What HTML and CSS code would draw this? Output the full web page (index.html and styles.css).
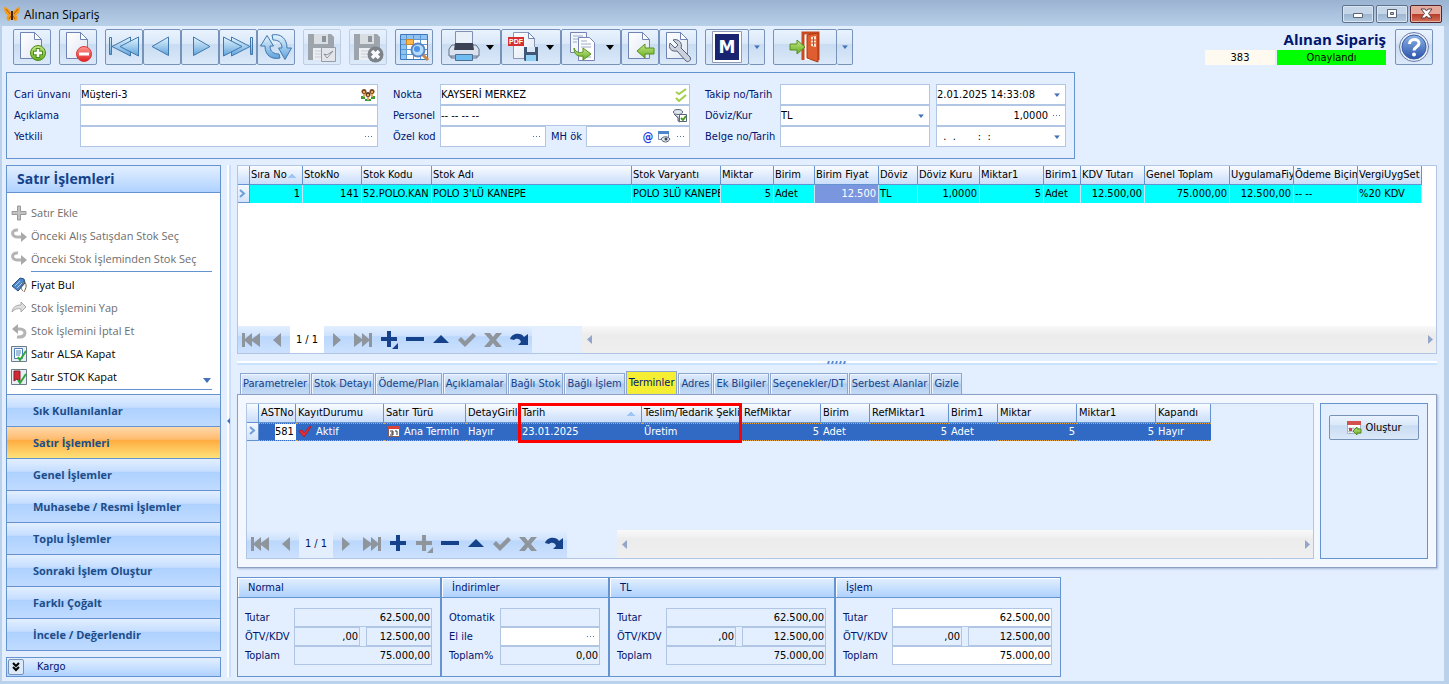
FILE: index.html
```html
<!DOCTYPE html>
<html lang="tr">

<head>
    <meta charset="UTF-8">
    <meta name="viewport" content="width=device-width, initial-scale=1.0">
    <title>Alınan Sipariş</title>
    <link rel="stylesheet" href="styles.css">
</head>

<body>
    <!-- shared icons -->
    <svg class="sprite" aria-hidden="true">
        <defs>
            <linearGradient id="blue" x1="0" y1="0" x2="0" y2="1">
                <stop offset="0" stop-color="#e6f5fd" />
                <stop offset="1" stop-color="#5fa3dc" />
            </linearGradient>
            <linearGradient id="paper" x1="0" y1="0" x2="1" y2="1">
                <stop offset="0" stop-color="#ffffff" />
                <stop offset="1" stop-color="#dfe7f3" />
            </linearGradient>
            <linearGradient id="green" x1="0" y1="0" x2="0" y2="1">
                <stop offset="0" stop-color="#c6e88a" />
                <stop offset="1" stop-color="#63ad1e" />
            </linearGradient>
            <linearGradient id="red" x1="0" y1="0" x2="0" y2="1">
                <stop offset="0" stop-color="#ff9a94" />
                <stop offset="1" stop-color="#e01f22" />
            </linearGradient>
            <linearGradient id="help" x1="0" y1="0" x2="0" y2="1">
                <stop offset="0" stop-color="#8fb4e6" />
                <stop offset="1" stop-color="#2a55ac" />
            </linearGradient>
        </defs>
        <symbol id="page" viewBox="0 0 32 32">
            <path d="M4.500 1.500h14l7 7v19h-21z" fill="url(#paper)" stroke="#6f83b5" />
            <path d="M18.500 1.500v7h7z" fill="#fff" stroke="#6f83b5" />
        </symbol>
        <symbol id="floppy" viewBox="0 0 32 32">
            <path d="M2 3h23l3 3v23H2z" fill="#8e9297" />
            <path d="M8 3h14v10H8z" fill="#d7dadd" />
            <path d="M16 5h4v6h-4z" fill="#777b80" />
            <path d="M7 17h17v12H7z" fill="#eef0f2" />
            <path d="M9 20h13M9 23h13M9 26h13" stroke="#c3c7cb" />
        </symbol>
        <symbol id="dots" viewBox="0 0 8 2">
            <path d="M0 0h1v1H0zM3 0h1v1H3zM6 0h1v1H6z" fill="#5577a8" />
        </symbol>
        <symbol id="caret" viewBox="0 0 8 5">
            <path d="M0 0h8L4 5z" fill="currentColor" />
        </symbol>
        <symbol id="nav-first" viewBox="0 0 20 20">
            <path d="M1 3h3v6l7-6v6l8-6v14l-8-6v6l-7-6v6H1z" fill="currentColor" />
        </symbol>
        <symbol id="nav-prev" viewBox="0 0 20 20">
            <path d="M14 3v14L6 10z" fill="currentColor" />
        </symbol>
        <symbol id="nav-next" viewBox="0 0 20 20">
            <path d="M6 3v14l8-7z" fill="currentColor" />
        </symbol>
        <symbol id="nav-last" viewBox="0 0 20 20">
            <path d="M19 3h-3v6L9 3v6L1 3v14l8-6v6l7-6v6h3z" fill="currentColor" />
        </symbol>
        <symbol id="nav-plus" viewBox="0 0 20 20">
            <path d="M8 1h4v6h6v4h-6v6H8v-6H2V7h6z" fill="currentColor" />
        </symbol>
        <symbol id="nav-plus-sub" viewBox="0 0 20 20">
            <path d="M8 1h4v6h6v4h-6v6H8v-6H2V7h6zM19 13v6h-6z" fill="currentColor" />
        </symbol>
        <symbol id="nav-minus" viewBox="0 0 20 20">
            <path d="M1 7h18v4H1z" fill="currentColor" />
        </symbol>
        <symbol id="nav-up" viewBox="0 0 20 20">
            <path d="M10 5l8 8H2z" fill="currentColor" />
        </symbol>
        <symbol id="nav-ok" viewBox="0 0 20 20">
            <path d="M1 10l3-3 4 4 8-8 3 3L8 17z" fill="currentColor" />
        </symbol>
        <symbol id="nav-cancel" viewBox="0 0 20 20">
            <path d="M1 3h6l3 4 3-4h6l-6 7 6 7h-6l-3-4-3 4H1l6-7z" fill="currentColor" />
        </symbol>
        <symbol id="nav-redo" viewBox="0 0 20 20">
            <path d="M1 9C3 3 12 2 15 7l4-3v11H9l3-3c-1-4-5-4-7-2z" fill="currentColor" />
        </symbol>
    </svg>

    <div class="window">
        <header class="titlebar">
            <svg class="app-icon" viewBox="0 0 16 16">
                <path d="M8 8C6 4 3 1 0 1c0 4 1 7 4 8-2 2-2 4 0 6 2 0 4-3 4-5 0 2 2 5 4 5 2-2 2-4 0-6 3-1 4-4 4-8-3 0-6 3-8 7z" fill="#f39c1d" />
                <path d="M2 3l4 5M14 3l-4 5M5 13l2-3M11 13l-2-3" stroke="#b5610c" />
                <path d="M8 5v9" stroke="#3c2412" stroke-width="2" />
            </svg>
            <span class="window-title">Alınan Sipariş</span>
            <button class="win-btn" aria-label="Küçült"><svg width="32" height="18" viewBox="0 0 32 18"><path d="M11.500 8.500h9v4h-9z" fill="#fff" stroke="#5a6675" /></svg></button>
            <button class="win-btn" aria-label="Büyüt"><svg width="32" height="18" viewBox="0 0 32 18"><path d="M11.500 4.500h9v8h-9z" fill="#fff" stroke="#5a6675" /><path d="M14.500 7.500h3v2h-3z" fill="#9fb8d2" stroke="#5a6675" /></svg></button>
            <button class="win-btn close" aria-label="Kapat"><svg width="32" height="18" viewBox="0 0 32 18"><path d="M11 4h4l1.500 2L18 4h4l-3.500 4.500L22 13h-4l-1.500-2L15 13h-4l3.500-4.500z" fill="#fff" stroke="#5b3a44" /></svg></button>
        </header>

        <div class="toolbar">
            <div class="tool-group">
                <button class="tool" aria-label="Yeni"><svg viewBox="0 0 32 32"><use href="#page" /><circle cx="22" cy="22" r="7.500" fill="url(#green)" stroke="#4d8a1b" /><path d="M22 17v10M17 22h10" stroke="#4d8a1b" stroke-width="4.500" /><path d="M22 18v8M18 22h8" stroke="#fff" stroke-width="2.500" /></svg></button>
            </div>
            <div class="tool-group">
                <button class="tool" aria-label="Sil"><svg viewBox="0 0 32 32"><use href="#page" /><circle cx="22" cy="23" r="7.500" fill="url(#red)" stroke="#d8393b" /><path d="M17 23h10" stroke="#fff" stroke-width="3" /></svg></button>
            </div>
            <div class="tool-group">
                <button class="tool" aria-label="İlk"><svg viewBox="0 0 32 32"><g fill="url(#blue)" stroke="#4077ae"><path d="M1.500 6.500h2v17h-2z" /><path d="M22.500 6v19L4 15.500z" /><path d="M30.500 6v19L12 15.500z" /></g></svg></button>
                <button class="tool" aria-label="Önceki"><svg viewBox="0 0 32 32"><path d="M22.500 6v18.500L6 15.500z" fill="url(#blue)" stroke="#4077ae" /></svg></button>
                <button class="tool" aria-label="Sonraki"><svg viewBox="0 0 32 32"><path d="M9.500 6v18.500L26 15.500z" fill="url(#blue)" stroke="#4077ae" /></svg></button>
                <button class="tool" aria-label="Son"><svg viewBox="0 0 32 32"><g fill="url(#blue)" stroke="#4077ae"><path d="M28.500 6.500h2v17h-2z" /><path d="M9.500 6v19L28 15.500z" /><path d="M1.500 6v19L20 15.500z" /></g></svg></button>
                <button class="tool" aria-label="Yenile"><svg viewBox="0 0 32 32"><g fill="url(#blue)" stroke="#4077ae"><path d="M7 4.500L13.500 15H10c0 6 4 8 9 8l1 4C11 29 5 24 5 15H.500z" /><path d="M25 28.500L18.500 17H22c0-6-4-8-9-8l-1-5c9-2 15 4 15 13h4.500z" /></g></svg></button>
            </div>
            <div class="tool-group">
                <button class="tool" disabled aria-label="Kaydet"><svg viewBox="0 0 32 32"><use href="#floppy" /><path d="M15.500 16.500h14v14h-14z" fill="#e2e5e8" stroke="#85898e" /><path d="M18 23l3 4 6-7-6 4z" fill="#fff" stroke="#777" /></svg></button>
            </div>
            <div class="tool-group">
                <button class="tool" disabled aria-label="Vazgeç"><svg viewBox="0 0 32 32"><use href="#floppy" /><circle cx="23.500" cy="23.500" r="8" fill="#65696d" /><path d="M20 20l7 7M27 20l-7 7" stroke="#fff" stroke-width="3.500" /></svg></button>
            </div>
            <div class="tool-group">
                <button class="tool" aria-label="Listele"><svg viewBox="0 0 32 32"><path d="M2.500 3.500h27v25h-27z" fill="#fff" stroke="#3c77bb" /><path d="M3 4h26v4H3zM3 4h5v24H3z" fill="#8dc2f2" /><path d="M8.500 4v24M15.500 4v24M22.500 4v24M3 8.500h26M3 13.500h26M3 18.500h26M3 23.500h26" stroke="#5b97d2" /><path d="M8.500 8.500h7v5h-7z" fill="#ffb64d" stroke="#cf8420" /><path d="M24 23l6 6" stroke="#c78746" stroke-width="3" /><circle cx="20" cy="19" r="6.500" fill="#b3dcff" stroke="#5a85c4" stroke-width="2" /><circle cx="19" cy="18" r="3" fill="#4b93e5" /></svg></button>
            </div>
            <div class="tool-group">
                <button class="tool drop" aria-label="Yazdır"><svg viewBox="0 0 32 32"><path d="M7.500.500h17v13h-17z" fill="#eaf0f8" stroke="#8190ae" /><path d="M3 15h26v12H3z" fill="#c8d2e3" stroke="#63708d" /><path d="M1 18l3-4h24l3 4v7H1z" fill="#dbe3ef" stroke="#63708d" /><path d="M7 12h18l1 7H6z" fill="#3b4254" /><path d="M7.500 23.500h17v6h-17z" fill="#6fbdf0" stroke="#4e6e95" /></svg><svg class="caret" viewBox="0 0 8 5"><use href="#caret" /></svg></button>
                <button class="tool drop" aria-label="PDF"><svg viewBox="0 0 32 32"><path d="M5.500 1.500h15l6 6v20h-21z" fill="url(#paper)" stroke="#8a97b5" /><path d="M20.500 1.500v6h6z" fill="#fff" stroke="#6f83b5" /><path d="M0 6h16v9H0z" fill="#d62f31" /><text class="pdf-mark" x="1" y="13">PDF</text><path d="M16 16h14v14H17l-1-1z" fill="#3f5774" /><path d="M19 16h8v5h-8z" fill="#dce8f5" /><path d="M18 24h10v6H18z" fill="#8fd0f4" /></svg><svg class="caret" viewBox="0 0 8 5"><use href="#caret" /></svg></button>
                <button class="tool drop" aria-label="Kopyala"><svg viewBox="0 0 32 32"><path d="M2.500 1.500h16v20h-16z" fill="#f3f7fc" stroke="#7685b3" /><path d="M10.500 6.500h11l5 5v18h-16z" fill="#fff" stroke="#7685b3" /><path d="M5 5h10M5 8h5M5 11h4M13 10h6M13 13h10M13 16h10M16 26h7" stroke="#9aa9ca" /><path d="M6 17c2 5 6 5 9 4v-4l8 6-8 6v-4C9 26 6 23 6 17z" fill="url(#green)" stroke="#568f21" /></svg><svg class="caret" viewBox="0 0 8 5"><use href="#caret" /></svg></button>
                <button class="tool" aria-label="Aktar"><svg viewBox="0 0 32 32"><use href="#page" /><path d="M13 20l8-7v4h9v6h-9v4z" fill="url(#green)" stroke="#568f21" /></svg></button>
                <button class="tool" aria-label="Ayarlar"><svg viewBox="0 0 32 32"><use href="#page" /><path d="M8 12l5 5 3-3-5-5c5-2 10 3 8 8l9 9c2 3-2 6-4 4l-9-10c-6 1-9-3-7-8z" fill="#cbd2dd" stroke="#55617a" /></svg></button>
            </div>
            <div class="tool-group">
                <button class="tool wide-m" aria-label="Mikro"><svg viewBox="0 0 32 32"><path d="M1.500.500h29v31h-29z" fill="#fff" stroke="#8f9bb5" /><path d="M4 3h24v26H4z" fill="#192471" /><text class="m-mark" x="16" y="22">M</text></svg></button>
                <button class="tool arrow" aria-label="Seçenekler"><svg class="caret" viewBox="0 0 8 5"><use href="#caret" /></svg></button>
            </div>
            <div class="tool-group">
                <button class="tool wide-exit" aria-label="Çıkış"><svg viewBox="0 0 32 32"><path d="M14 29V2h15v27" fill="#fff" stroke="#c84a20" stroke-width="3" /><path d="M18 4l11-2v29l-11-4z" fill="#e05d31" stroke="#a93912" /><path d="M22 6l5-1v11l-5-1z" fill="#fbe5cf" /><path d="M22 9h5M22 12h5M24.500 6v9" stroke="#c84a20" /><path d="M1 13h7V9l8 7-8 7v-4H1z" fill="url(#green)" stroke="#568f21" /></svg></button>
                <button class="tool arrow" aria-label="Çıkış seçenekleri"><svg class="caret" viewBox="0 0 8 5"><use href="#caret" /></svg></button>
            </div>
            <div class="status">
                <h1>Alınan Sipariş</h1>
                <div class="status-row">
                    <span class="order-no">383</span>
                    <span class="approved">Onaylandı</span>
                </div>
            </div>
            <button class="tool" aria-label="Yardım"><svg viewBox="0 0 32 32"><circle cx="16" cy="16" r="14.500" fill="#e6ebf6" stroke="#6c7da8" /><circle cx="16" cy="16" r="12" fill="url(#help)" stroke="#3a5fa8" /><path d="M11.500 13c0-6 9.500-6 9.500-.500 0 3-5 3.500-5 7" fill="none" stroke="#fff" stroke-width="3" /><circle cx="16" cy="23.500" r="2" fill="#fff" /></svg></button>
        </div>

        <form class="order-form">
            <div class="form-col col-customer">
                <label for="cari">Cari ünvanı</label>
                <div class="field"><input id="cari" value="Müşteri-3"><button type="button" aria-label="Cari seç"><svg width="14" height="14" viewBox="0 0 14 14"><path d="M0 8h4v3H0zM10 8h4v3h-4zM4 11h6v2H4z" fill="#3e9a37" /><path d="M2 6h2v3H2zM10 6h2v3h-2zM6 9h2v3H6z" fill="#e0a860" /><circle cx="3" cy="3.500" r="2.500" fill="#7c4a1e" /><circle cx="11" cy="3.500" r="2.500" fill="#7c4a1e" /><circle cx="7" cy="6.500" r="2.500" fill="#6a3c18" /><path d="M2 3h2v2H2zM10 3h2v2h-2zM6 6h2v2H6z" fill="#e0a860" /></svg></button></div>
                <label for="aciklama">Açıklama</label>
                <div class="field"><input id="aciklama"></div>
                <label for="yetkili">Yetkili</label>
                <div class="field"><input id="yetkili"><button type="button" aria-label="Yetkili seç"><svg width="8" height="2"><use href="#dots" /></svg></button></div>
            </div>
            <div class="form-col col-point">
                <label for="nokta">Nokta</label>
                <div class="field"><input id="nokta" value="KAYSERİ MERKEZ"><button type="button" aria-label="Nokta seç"><svg width="12" height="14" viewBox="0 0 12 14"><path d="M1 4l3 2 7-5M1 10l3 3 7-6" fill="none" stroke="#a2ce4b" stroke-width="2" /></svg></button></div>
                <label for="personel">Personel</label>
                <div class="field"><input id="personel" value="-- -- -- --"><button type="button" aria-label="Personel seç"><svg width="14" height="14" viewBox="0 0 14 14"><ellipse cx="5" cy="3" rx="4.500" ry="2.500" fill="#dfe5ee" stroke="#59657c" /><path d="M1 5l4 4v3l2 1V8" fill="#aeb8c8" stroke="#59657c" /><path d="M6.500 5.500h7v7h-7z" fill="#fff" stroke="#59657c" /><path d="M8 9l2 2 3-4" fill="none" stroke="#4a9d22" stroke-width="2" /></svg></button></div>
                <label for="ozelkod">Özel kod</label>
                <div class="split-row">
                    <div class="field"><input id="ozelkod"><button type="button" aria-label="Özel kod seç"><svg width="8" height="2"><use href="#dots" /></svg></button></div>
                    <label for="mhok">MH ök</label>
                    <div class="field mh-field"><input id="mhok"><button type="button" class="at">@</button><button type="button" aria-label="Göster"><svg width="13" height="12" viewBox="0 0 13 12"><path d="M.500.500h10v8H.500z" fill="#f4f8fd" stroke="#7d93b5" /><path d="M0 0h11v3H0z" fill="#4d86c8" /><path d="M3 8c2-3 7-3 9 0-2 4-7 4-9 0z" fill="#dfe5ee" stroke="#5b6577" /><circle cx="8" cy="8" r="1.500" fill="#3c4759" /></svg></button><button type="button" aria-label="MH ök seç"><svg width="8" height="2"><use href="#dots" /></svg></button></div>
                </div>
            </div>
            <div class="form-col col-doc">
                <label for="takip">Takip no/Tarih</label>
                <div class="field"><input id="takip"></div>
                <div class="field"><input aria-label="Tarih" value="2.01.2025 14:33:08"><button type="button" aria-label="Takvim"><svg class="caret" viewBox="0 0 8 5"><use href="#caret" /></svg></button></div>
                <label for="doviz">Döviz/Kur</label>
                <div class="field"><select id="doviz"><option>TL</option></select><svg class="caret" viewBox="0 0 8 5"><use href="#caret" /></svg></div>
                <div class="field"><input class="num" aria-label="Kur" value="1,0000"><button type="button" aria-label="Kur seç"><svg width="8" height="2"><use href="#dots" /></svg></button></div>
                <label for="belge">Belge no/Tarih</label>
                <div class="field"><input id="belge"></div>
                <div class="field"><input class="blank-date" aria-label="Belge tarihi" value="  .  .       :  :"><button type="button" aria-label="Takvim"><svg class="caret" viewBox="0 0 8 5"><use href="#caret" /></svg></button></div>
            </div>
        </form>

        <div class="content">
            <aside class="sidebar">
                <div class="nav-panel">
                    <h2>Satır İşlemleri</h2>
                    <div class="actions">
                        <button disabled><svg viewBox="0 0 16 16"><path d="M6.500 1h3v5.500H15v3H9.500V15h-3V9.500H1v-3h5.500z" fill="#c2c2c2" stroke="#9a9a9a" /></svg>Satır Ekle</button>
                        <button disabled><svg viewBox="0 0 16 16"><path d="M7 2C0 1 0 9 6 9h5" fill="none" stroke="#b4b4b4" stroke-width="3" /><path d="M10 4l6 5-6 5z" fill="#a9a9a9" /></svg>Önceki Alış Satışdan Stok Seç</button>
                        <button disabled><svg viewBox="0 0 16 16"><path d="M7 2C0 1 0 9 6 9h5" fill="none" stroke="#b4b4b4" stroke-width="3" /><path d="M10 4l6 5-6 5z" fill="#a9a9a9" /></svg>Önceki Stok İşleminden Stok Seç</button>
                        <hr>
                        <button><svg viewBox="0 0 16 16"><path d="M1 9l8-8 4 1 1 4-7 8z" fill="#4d86c8" stroke="#26507f" /><path d="M4 9l5-5M6 11l5-5" stroke="#a9cdf2" /><path d="M12 4c5 3 3 7 1 11M12 6c-3 4-2 6 0 8" fill="none" stroke="#745b3d" /></svg>Fiyat Bul</button>
                        <button disabled><svg viewBox="0 0 16 16"><path d="M1 12C2 6 6 5 10 5V2l5 5-5 5V9C6 8 4 9 1 12z" fill="#dedede" stroke="#a9a9a9" /></svg>Stok İşlemini Yap</button>
                        <button disabled><svg viewBox="0 0 16 16"><path d="M6 14c10 1 10-8 3-8H5" fill="none" stroke="#b4b4b4" stroke-width="3" /><path d="M7 1L1 6l6 5z" fill="#a9a9a9" /></svg>Stok İşlemini İptal Et</button>
                        <button><svg viewBox="0 0 16 16"><path d="M.500.500h15v15H.500z" fill="#e8eef4" stroke="#6d7c8c" /><path d="M3.500 2.500h8v10h-8z" fill="#fff" stroke="#4a7fbc" /><path d="M5 5h5M5 7h5M5 9h4" stroke="#4a7fbc" /><path d="M7 11l2 3 6-9" fill="none" stroke="#2ea836" stroke-width="2" /></svg>Satır ALSA Kapat</button>
                        <button><svg viewBox="0 0 16 16"><path d="M.500.500h15v15H.500z" fill="#e8eef4" stroke="#6d7c8c" /><path d="M3 2h6v11l-3-3-3 2z" fill="#d32734" stroke="#86202a" /><path d="M7 11l2 3 6-9" fill="none" stroke="#2ea836" stroke-width="2" /></svg>Satır STOK Kapat<svg class="caret more" viewBox="0 0 8 5"><use href="#caret" /></svg></button>
                        <hr>
                    </div>
                    <nav class="groups">
                        <a href="#">Sık Kullanılanlar</a>
                        <a href="#" class="active">Satır İşlemleri</a>
                        <a href="#">Genel İşlemler</a>
                        <a href="#">Muhasebe / Resmi İşlemler</a>
                        <a href="#">Toplu İşlemler</a>
                        <a href="#">Sonraki İşlem Oluştur</a>
                        <a href="#">Farklı Çoğalt</a>
                        <a href="#">İncele / Değerlendir</a>
                    </nav>
                </div>
                <div class="cargo">
                    <button aria-label="Kargo aç"><svg width="8" height="10" viewBox="0 0 8 10"><path d="M1 1l3 3 3-3M1 5l3 3 3-3" fill="none" stroke="#000" stroke-width="2" /></svg></button>
                    <span>Kargo</span>
                </div>
            </aside>
            <div class="v-splitter"><svg width="4" height="6" viewBox="0 0 4 6"><path d="M3 0v6L0 3z" fill="#4472b8" /></svg></div>

            <main>
                <section class="lines">
                    <table class="grid lines-grid">
                        <colgroup><col><col><col><col><col><col><col><col><col><col><col><col><col><col><col><col><col><col></colgroup>
                        <thead>
                            <tr>
                                <th></th>
                                <th class="sorted">Sıra No</th>
                                <th>StokNo</th>
                                <th>Stok Kodu</th>
                                <th>Stok Adı</th>
                                <th>Stok Varyantı</th>
                                <th>Miktar</th>
                                <th>Birim</th>
                                <th>Birim Fiyat</th>
                                <th>Döviz</th>
                                <th>Döviz Kuru</th>
                                <th>Miktar1</th>
                                <th>Birim1</th>
                                <th>KDV Tutarı</th>
                                <th>Genel Toplam</th>
                                <th>UygulamaFiy</th>
                                <th>Ödeme Biçim</th>
                                <th>VergiUygSet</th>
                            </tr>
                        </thead>
                        <tbody>
                            <tr>
                                <td class="marker"><svg width="7" height="9" viewBox="0 0 7 9"><path d="M1 1l4 3.500L1 8" fill="none" stroke="#6f9edb" stroke-width="2" /></svg></td>
                                <td class="num">1</td>
                                <td class="num">141</td>
                                <td>52.POLO.KAN</td>
                                <td>POLO 3'LÜ KANEPE</td>
                                <td>POLO 3LÜ KANEPE</td>
                                <td class="num">5</td>
                                <td>Adet</td>
                                <td class="num focused">12.500</td>
                                <td>TL</td>
                                <td class="num">1,0000</td>
                                <td class="num">5</td>
                                <td>Adet</td>
                                <td class="num">12.500,00</td>
                                <td class="num">75.000,00</td>
                                <td class="num">12.500,00</td>
                                <td>-- --</td>
                                <td>%20 KDV</td>
                            </tr>
                        </tbody>
                    </table>
                    <div class="grid-footer">
                        <div class="navigator">
                            <button disabled aria-label="İlk"><svg><use href="#nav-first" /></svg></button>
                            <button disabled aria-label="Önceki"><svg><use href="#nav-prev" /></svg></button>
                            <span class="pos">1 / 1</span>
                            <button disabled aria-label="Sonraki"><svg><use href="#nav-next" /></svg></button>
                            <button disabled aria-label="Son"><svg><use href="#nav-last" /></svg></button>
                            <button aria-label="Ekle"><svg><use href="#nav-plus-sub" /></svg></button>
                            <button aria-label="Sil"><svg><use href="#nav-minus" /></svg></button>
                            <button aria-label="Düzenle"><svg><use href="#nav-up" /></svg></button>
                            <button disabled aria-label="Kaydet"><svg><use href="#nav-ok" /></svg></button>
                            <button disabled aria-label="Vazgeç"><svg><use href="#nav-cancel" /></svg></button>
                            <button aria-label="Yenile"><svg><use href="#nav-redo" /></svg></button>
                        </div>
                        <div class="scrollbar">
                            <button aria-label="Sola"><svg width="5" height="9" viewBox="0 0 5 9"><path d="M5 0v9L0 4.500z" fill="#93a5c8" /></svg></button>
                            <button aria-label="Sağa"><svg width="5" height="9" viewBox="0 0 5 9"><path d="M0 0v9l5-4.500z" fill="#93a5c8" /></svg></button>
                        </div>
                    </div>
                </section>

                <div class="h-splitter"><svg width="20" height="3" viewBox="0 0 20 3"><path d="M2 0L1 3M6 0L5 3M10 0L9 3M14 0l-1 3M18 0l-1 3" stroke="#5b8bd0" stroke-width="2" /></svg></div>

                <div class="tabs" role="tablist">
                    <button role="tab">Parametreler</button>
                    <button role="tab">Stok Detayı</button>
                    <button role="tab">Ödeme/Plan</button>
                    <button role="tab">Açıklamalar</button>
                    <button role="tab">Bağlı Stok</button>
                    <button role="tab">Bağlı İşlem</button>
                    <button role="tab" class="active" aria-selected="true">Terminler</button>
                    <button role="tab">Adres</button>
                    <button role="tab">Ek Bilgiler</button>
                    <button role="tab">Seçenekler/DT</button>
                    <button role="tab">Serbest Alanlar</button>
                    <button role="tab">Gizle</button>
                </div>
                <section class="tab-panel">
                    <div class="terms">
                        <div class="highlight"></div>
                        <table class="grid terms-grid">
                            <colgroup><col><col><col><col><col><col><col><col><col><col><col><col><col><col></colgroup>
                            <thead>
                                <tr>
                                    <th></th>
                                    <th>ASTNo</th>
                                    <th>KayıtDurumu</th>
                                    <th>Satır Türü</th>
                                    <th>DetayGirile</th>
                                    <th class="sorted">Tarih</th>
                                    <th>Teslim/Tedarik Şekli</th>
                                    <th>RefMiktar</th>
                                    <th>Birim</th>
                                    <th>RefMiktar1</th>
                                    <th>Birim1</th>
                                    <th>Miktar</th>
                                    <th>Miktar1</th>
                                    <th>Kapandı</th>
                                </tr>
                            </thead>
                            <tbody>
                                <tr>
                                    <td class="marker"><svg width="7" height="9" viewBox="0 0 7 9"><path d="M1 1l4 3.500L1 8" fill="none" stroke="#6f9edb" stroke-width="2" /></svg></td>
                                    <td class="tree-cell"><span>581</span></td>
                                    <td><svg width="14" height="12" viewBox="0 0 14 12"><path d="M1 6l3-1 2 3 6-7 1 1-7 10z" fill="#e5303a" stroke="#b51e28" /></svg>Aktif</td>
                                    <td class="type-cell"><svg width="12" height="12" viewBox="0 0 12 12"><path d="M.500 2.500h11v9H.500z" fill="#fff" stroke="#8a5a5a" /><path d="M0 1h12v3H0z" fill="#d8443c" /><path d="M2 6h3v4H2M5 8H3M7 6h2v4" fill="none" stroke="#333" /></svg>Ana Termin</td>
                                    <td>Hayır</td>
                                    <td>23.01.2025</td>
                                    <td>Üretim</td>
                                    <td class="num">5</td>
                                    <td>Adet</td>
                                    <td class="num">5</td>
                                    <td>Adet</td>
                                    <td class="num">5</td>
                                    <td class="num">5</td>
                                    <td>Hayır</td>
                                </tr>
                            </tbody>
                        </table>
                        <div class="grid-footer">
                            <div class="navigator">
                                <button disabled aria-label="İlk"><svg><use href="#nav-first" /></svg></button>
                                <button disabled aria-label="Önceki"><svg><use href="#nav-prev" /></svg></button>
                                <span class="pos">1 / 1</span>
                                <button disabled aria-label="Sonraki"><svg><use href="#nav-next" /></svg></button>
                                <button disabled aria-label="Son"><svg><use href="#nav-last" /></svg></button>
                                <button aria-label="Ekle"><svg><use href="#nav-plus" /></svg></button>
                                <button disabled aria-label="Alt ekle"><svg><use href="#nav-plus-sub" /></svg></button>
                                <button aria-label="Sil"><svg><use href="#nav-minus" /></svg></button>
                                <button aria-label="Düzenle"><svg><use href="#nav-up" /></svg></button>
                                <button disabled aria-label="Kaydet"><svg><use href="#nav-ok" /></svg></button>
                                <button disabled aria-label="Vazgeç"><svg><use href="#nav-cancel" /></svg></button>
                                <button aria-label="Yenile"><svg><use href="#nav-redo" /></svg></button>
                            </div>
                            <div class="scrollbar">
                                <button aria-label="Sola"><svg width="5" height="9" viewBox="0 0 5 9"><path d="M5 0v9L0 4.500z" fill="#93a5c8" /></svg></button>
                                <button aria-label="Sağa"><svg width="5" height="9" viewBox="0 0 5 9"><path d="M0 0v9l5-4.500z" fill="#93a5c8" /></svg></button>
                            </div>
                        </div>
                    </div>
                    <div class="side-box">
                        <button class="create-btn"><svg width="16" height="16" viewBox="0 0 16 16"><path d="M1.500 1.500h13v12h-13z" fill="#fff" stroke="#a8b2c6" /><path d="M1 1h14v4H1z" fill="#d4524e" /><path d="M4 7v6M7 7v6M10 7v6M2 8.500h12M2 11.500h12" stroke="#b9c2d4" /><path d="M3 8h3v3H3z" fill="#c94743" /><path d="M7 11l4-4v2h4v4h-4v2z" fill="url(#green)" stroke="#568f21" /></svg>Oluştur</button>
                    </div>
                </section>

                <div class="totals">
                    <fieldset class="total-box">
                        <h3>Normal</h3>
                        <div class="total-rows">
                            <label for="n1">Tutar</label><input id="n1" value="62.500,00" readonly>
                            <label for="n2">ÖTV/KDV</label><div class="pair"><input id="n2" value=",00" readonly><input aria-label="Normal KDV" value="12.500,00" readonly></div>
                            <label for="n3">Toplam</label><input id="n3" value="75.000,00" readonly>
                        </div>
                    </fieldset>
                    <fieldset class="total-box discounts">
                        <h3>İndirimler</h3>
                        <div class="total-rows">
                            <label for="d1">Otomatik</label><input id="d1" readonly>
                            <label for="d2">El ile</label><div class="field"><input id="d2"><button type="button" aria-label="İndirim seç"><svg width="8" height="2"><use href="#dots" /></svg></button></div>
                            <label for="d3">Toplam%</label><input id="d3" value="0,00" readonly>
                        </div>
                    </fieldset>
                    <fieldset class="total-box large">
                        <h3>TL</h3>
                        <div class="total-rows">
                            <label for="t1">Tutar</label><input id="t1" value="62.500,00" readonly>
                            <label for="t2">ÖTV/KDV</label><div class="pair"><input id="t2" value=",00" readonly><input aria-label="TL KDV" value="12.500,00" readonly></div>
                            <label for="t3">Toplam</label><input id="t3" value="75.000,00" readonly>
                        </div>
                    </fieldset>
                    <fieldset class="total-box large">
                        <h3>İşlem</h3>
                        <div class="total-rows">
                            <label for="i1">Tutar</label><input id="i1" value="62.500,00">
                            <label for="i2">ÖTV/KDV</label><div class="pair"><input id="i2" value=",00" readonly><input aria-label="İşlem KDV" value="12.500,00" readonly></div>
                            <label for="i3">Toplam</label><input id="i3" value="75.000,00">
                        </div>
                    </fieldset>
                </div>
            </main>
        </div>
    </div>
</body>

</html>
```
FILE: styles.css
```css
* {
    box-sizing: border-box;
}

body {
    margin: 0;
    font-family: "DejaVu Sans Condensed", "DejaVu Sans", sans-serif;
    font-size: 11px;
    line-height: 16px;
    color: #00156e;
    background-color: #b9d1ea;
}

button,
input,
select {
    font: inherit;
    color: inherit;
    margin: 0;
    padding: 0;
    border: none;
    border-radius: 0;
    background: none;
}

svg {
    display: block;
    flex: none;
}

.sprite {
    position: absolute;
    width: 0;
    height: 0;
}

.caret {
    width: 6px;
    height: 4px;
    color: #4472b8;
}

.window {
    min-height: 100vh;
    display: flex;
    flex-direction: column;
    border: solid #b9d1ea;
    border-width: 0 5px 3px 2px;
    background-color: #e3efff;
}

/* title bar */
.titlebar {
    display: flex;
    align-items: center;
    gap: 2px;
    height: 26px;
    margin: 0 -5px 0 -2px;
    padding: 2px 7px 0 4px;
    background: linear-gradient(#9ab3d1, #b8cfe8);
}

.app-icon {
    width: 16px;
    height: 16px;
}

.window-title {
    flex-grow: 1;
    padding: 2px 0 0 2px;
    font-family: "Open Sans", sans-serif;
    font-size: 12px;
    color: #000;
}

.win-btn {
    width: 32px;
    height: 18px;
    display: flex;
    align-items: center;
    justify-content: center;
    border: 1px solid #5f738d;
    border-radius: 2px;
    background: linear-gradient(#c5d6e8 50%, #9cb5d0 50%, #b5cbe2);
    box-shadow: inset 0 0 0 1px #d9e5f2;
}

.win-btn.close {
    border-color: #54222a;
    background: linear-gradient(#e6a79b 50%, #b83a28 50%, #d3725a);
    box-shadow: inset 0 0 0 1px #e7b2a6;
}

/* toolbar */
.toolbar {
    display: flex;
    gap: 8px;
    padding: 3px 11px 7px;
}

.tool-group {
    display: flex;
}

.tool {
    display: flex;
    align-items: center;
    justify-content: center;
    width: 38px;
    height: 36px;
    border: 1px solid #7793b9;
    border-radius: 2px;
    background: linear-gradient(#eaf3fe, #dae8f8 40%, #c9dcf2 42%, #dbe9f9);
}

.tool > svg:first-child:not(.caret) {
    width: 32px;
    height: 32px;
}

.tool:disabled {
    border-color: #b5c5da;
    opacity: 0.8;
}

.tool.drop {
    width: 60px;
    gap: 6px;
}

.tool.drop .caret {
    width: 8px;
    height: 5px;
    color: #000;
}

.tool.wide-m {
    width: 44px;
}

.tool.wide-exit {
    width: 64px;
}

.tool.arrow {
    width: 16px;
    border-left: none;
}

.pdf-mark {
    font: bold 7px "Liberation Sans", sans-serif;
    fill: #fff;
}

.m-mark {
    font: bold 17px "DejaVu Sans", sans-serif;
    fill: #fff;
    text-anchor: middle;
}

.status {
    margin-left: auto;
    padding-right: 1px;
    text-align: right;
}

.status h1 {
    margin: 0;
    font-family: "Open Sans", sans-serif;
    font-size: 15px;
    line-height: 21px;
}

.status-row {
    display: flex;
    justify-content: flex-end;
    gap: 2px;
    line-height: 15px;
    color: #000;
    text-align: center;
}

.order-no {
    width: 70px;
    background-color: #fffaf0;
}

.approved {
    width: 109px;
    background-color: #00ff00;
}

/* order form */
.order-form {
    display: flex;
    align-self: flex-start;
    gap: 15px;
    margin: 0 0 6px 4px;
    padding: 11px 14px 11px 7px;
    border: 1px solid #6593cf;
}

.form-col {
    display: grid;
    grid-auto-rows: 21px;
    align-items: center;
}

.col-customer {
    grid-template-columns: 66px 298px;
}

.col-point {
    grid-template-columns: 47px 250px;
}

.col-doc {
    grid-template-columns: 75px 150px 130px;
}

.col-doc .field:nth-child(3n) {
    margin-left: 6px;
    width: 130px;
}

.field {
    display: flex;
    align-items: center;
    min-width: 0;
    height: 21px;
    padding-right: 2px;
    border: 1px solid #b1c6e4;
    background-color: #fff;
    color: #000;
}

.field input,
.field select {
    flex: 1;
    min-width: 0;
    height: 19px;
    outline: none;
    appearance: none;
}

.field button {
    display: flex;
    align-items: center;
    justify-content: center;
    min-width: 12px;
    height: 19px;
}

.field > .caret {
    margin-right: 3px;
}

.field .num {
    padding-right: 3px;
}

.split-row {
    display: flex;
    align-items: center;
}

.split-row .field {
    flex: 1;
}

.split-row label {
    width: 40px;
    padding-left: 5px;
}

.split-row .mh-field {
    flex: 0 0 104px;
    gap: 4px;
}

.field .at {
    font-size: 12px;
    font-weight: bold;
    color: #1f3fe0;
}

.num {
    text-align: right;
}

.blank-date {
    white-space: pre;
}

/* sidebar */
.content {
    flex-grow: 1;
    display: flex;
    padding: 0 7px 4px 4px;
}

.sidebar {
    flex: 0 0 215px;
    display: flex;
    flex-direction: column;
    justify-content: space-between;
    gap: 6px;
}

.nav-panel {
    display: flex;
    flex-direction: column;
    border: 1px solid #6593cf;
    background-color: #fff;
    font-family: "Open Sans", sans-serif;
}

.nav-panel h2 {
    margin: 0;
    padding-left: 10px;
    border-bottom: 1px solid #6593cf;
    background: linear-gradient(#e3efff, #afd2ff);
    font-size: 14px;
    line-height: 26px;
    color: #15428b;
}

.actions {
    padding: 8px 8px 3px 4px;
}

.actions button {
    display: flex;
    align-items: center;
    gap: 4px;
    width: 100%;
    height: 23px;
    color: #000;
    white-space: nowrap;
}

.actions button:disabled {
    color: #6d6d6d;
}

.actions button > svg:first-child {
    width: 16px;
    height: 16px;
}

.actions .more {
    width: 8px;
    height: 5px;
    margin: 8px 1px 0 auto;
}

.actions hr {
    margin: 1px 0 1px 20px;
    border: none;
    border-top: 1px solid #6593cf;
}

.groups a {
    display: block;
    height: 32px;
    padding-left: 26px;
    border-top: 1px solid #6593cf;
    background: linear-gradient(#e3efff, #c4ddff 40%, #add1ff 42%, #c0dbff);
    font-weight: bold;
    line-height: 31px;
    color: #204d89;
    text-decoration: none;
}

.groups a.active {
    background: linear-gradient(#ffd9aa, #ffbb6e 40%, #ffab3f 42%, #fee17a);
}

.cargo {
    display: flex;
    align-items: center;
    gap: 13px;
    height: 20px;
    padding-left: 1px;
    border: 1px solid #6593cf;
    background: linear-gradient(#e3efff, #afd2ff);
}

.cargo button {
    display: flex;
    align-items: center;
    justify-content: center;
    width: 16px;
    height: 16px;
    border: 1px solid #7793b9;
    border-radius: 2px;
    background-color: #dbe9f9;
}

.v-splitter {
    display: flex;
    align-items: center;
    justify-content: flex-end;
    width: 4px;
    margin: 0 6px;
    border-left: 2px solid #fff;
    background-color: #c9dfff;
}

main {
    flex: 1;
    min-width: 0;
    display: flex;
    flex-direction: column;
}

/* grids */
.grid {
    table-layout: fixed;
    width: 0;
    border-collapse: separate;
    border-spacing: 0;
    color: #000;
}

.grid th,
.grid td {
    height: 18px;
    padding: 0 2px 0 1px;
    overflow: hidden;
    white-space: nowrap;
    line-height: 16px;
}

.grid th {
    height: 19px;
    padding-right: 0;
    border: solid #6593cf;
    border-width: 0 1px 1px 0;
    background: linear-gradient(#fafcff, #dce9fd 60%, #cbdffb);
    font-weight: normal;
    text-align: left;
}

.grid th.sorted {
    background:
        linear-gradient(to bottom right, transparent 50%, #9cc6f8 50%) no-repeat right 10px top 7px / 4px 5px,
        linear-gradient(to bottom left, transparent 50%, #9cc6f8 50%) no-repeat right 6px top 7px / 4px 5px,
        linear-gradient(#fafcff, #dce9fd 60%, #cbdffb);
}

.grid .num {
    text-align: right;
}

.grid .marker {
    border: solid #6593cf;
    border-width: 0 1px 1px 0;
    background: linear-gradient(#f4f8ff, #d3e4fb);
}

.grid td svg {
    display: inline-block;
    vertical-align: middle;
}

.lines {
    flex: 1 0 189px;
    display: flex;
    flex-direction: column;
    justify-content: space-between;
    border: 1px solid #b1c6e4;
    background-color: #fff;
}

.lines-grid td:not(.marker) {
    border-right: 1px solid #c9e4f7;
    background-color: #00ffff;
}

.lines-grid td.focused {
    background-color: #7a96df;
    color: #fff;
}

.lines-grid col:nth-child(1) { width: 12px; }
.lines-grid col:nth-child(2) { width: 53px; }
.lines-grid col:nth-child(3) { width: 59px; }
.lines-grid col:nth-child(4) { width: 70px; }
.lines-grid col:nth-child(5) { width: 200px; }
.lines-grid col:nth-child(6) { width: 89px; }
.lines-grid col:nth-child(7) { width: 53px; }
.lines-grid col:nth-child(8) { width: 41px; }
.lines-grid col:nth-child(9) { width: 64px; }
.lines-grid col:nth-child(10) { width: 39px; }
.lines-grid col:nth-child(11) { width: 62px; }
.lines-grid col:nth-child(12) { width: 64px; }
.lines-grid col:nth-child(13) { width: 37px; }
.lines-grid col:nth-child(14) { width: 64px; }
.lines-grid col:nth-child(15) { width: 85px; }
.lines-grid col:nth-child(n+16) { width: 64px; }

.grid-footer {
    display: flex;
    gap: 50px;
    align-items: flex-end;
}

.lines .grid-footer {
    background-color: #e3efff;
}

.navigator {
    display: flex;
    height: 27px;
    background: linear-gradient(#e3efff, #cfe2fd 35%, #bad7fc 40%, #cde1fe);
}

.navigator button {
    display: flex;
    align-items: center;
    justify-content: center;
    width: 26px;
    color: #15428b;
}

.navigator button:disabled {
    color: #8f959c;
}

.navigator svg {
    width: 20px;
    height: 20px;
}

.navigator .pos {
    width: 34px;
    background-color: #fff;
    color: #000;
    line-height: 28px;
    text-align: center;
}

.scrollbar {
    flex: 1;
    display: flex;
    align-items: center;
    justify-content: space-between;
    height: 27px;
    padding: 0 3px 0 5px;
    background: linear-gradient(#f9f9f9, #ececec 35%, #efefef);
}

.h-splitter {
    display: flex;
    justify-content: center;
    height: 4px;
    margin: 7px 0 6px;
    border-bottom: 2px solid #c9e2ff;
    background-color: #fff;
}

/* tabs */
.tabs {
    display: flex;
    align-items: flex-end;
    gap: 1px;
    height: 23px;
    padding-left: 3px;
}

.tabs button {
    height: 21px;
    padding: 0 2px;
    border: 1px solid #8ca6cf;
    border-bottom: none;
    background: linear-gradient(#dfebfb, #c8dcf5 45%, #afcbed 50%, #c6dcf7);
    box-shadow: inset 1px 1px #f0f6ff;
    color: #15428b;
}

.tabs .active {
    height: 23px;
    background: #f5ee33;
    box-shadow: none;
    color: #00156e;
}

.tab-panel {
    display: flex;
    gap: 6px;
    height: 174px;
    padding: 8px;
    border: 1px solid #8ca0c5;
    background-color: #f3f7ff;
    box-shadow: 1px 1px 2px #a5b8d8;
}

.terms {
    position: relative;
    flex: 1;
    min-width: 0;
    display: flex;
    flex-direction: column;
    justify-content: space-between;
    border: 1px solid #b1c6e4;
    background-color: #e3efff;
}

.terms .navigator,
.terms .scrollbar {
    height: 28px;
}

.terms-grid th,
.terms-grid td {
    padding-left: 2px;
}

.terms-grid td:not(.marker) {
    border: dotted #e8a33d;
    border-width: 1px 0;
    background-color: #316ac5;
    color: #fff;
}

.terms-grid td.tree-cell {
    padding: 0 0 0 16px;
}

.tree-cell span {
    display: block;
    height: 16px;
    background-color: #fff;
    color: #000;
}

.terms-grid .type-cell {
    padding-left: 4px;
}

.terms-grid td svg {
    margin: 0 4px 2px 0;
}

.terms-grid col:nth-child(1) { width: 12px; }
.terms-grid col:nth-child(2) { width: 37px; }
.terms-grid col:nth-child(3) { width: 88px; }
.terms-grid col:nth-child(4) { width: 82px; }
.terms-grid col:nth-child(5) { width: 54px; }
.terms-grid col:nth-child(6) { width: 122px; }
.terms-grid col:nth-child(7) { width: 100px; }
.terms-grid col:nth-child(8) { width: 79px; }
.terms-grid col:nth-child(9) { width: 49px; }
.terms-grid col:nth-child(10) { width: 79px; }
.terms-grid col:nth-child(11) { width: 49px; }
.terms-grid col:nth-child(12) { width: 79px; }
.terms-grid col:nth-child(13) { width: 79px; }
.terms-grid col:nth-child(14) { width: 55px; }

/* frame drawn over the date and delivery columns */
.highlight {
    position: absolute;
    top: -1px;
    left: 271px;
    width: 224px;
    height: 40px;
    border: 3px solid #ff0000;
}

.terms .navigator .pos {
    background-color: #e3efff;
    color: #00156e;
}

.side-box {
    width: 108px;
    padding: 11px 8px;
    border: 1px solid #6593cf;
    background-color: #e3efff;
}

.create-btn {
    display: flex;
    align-items: center;
    justify-content: center;
    gap: 3px;
    width: 100%;
    height: 25px;
    border: 1px solid #7793b9;
    border-radius: 2px;
    background: linear-gradient(#eaf3fe, #dae8f8 40%, #c9dcf2 42%, #dbe9f9);
    color: #000;
}

/* totals */
.totals {
    display: flex;
    margin-top: 9px;
}

.total-box {
    width: 204px;
    margin: 0;
    padding: 0;
    border: 1px solid #6593cf;
}

.total-box.discounts {
    width: 168px;
}

.total-box.large {
    width: 226px;
}

.total-box h3 {
    margin: 0;
    padding-left: 10px;
    border-bottom: 1px solid #6593cf;
    background: linear-gradient(#e3efff, #afd2ff);
    box-shadow: inset 1px 1px #fff;
    font-size: 11px;
    font-weight: normal;
    line-height: 19px;
}

.total-rows {
    display: grid;
    grid-template-columns: 49px 1fr;
    grid-auto-rows: 19px;
    align-items: center;
    padding: 10px 8px 11px 7px;
}

.discounts .total-rows {
    grid-template-columns: 51px 1fr;
}

.total-rows input {
    width: 100%;
    min-width: 0;
    height: 19px;
    padding: 0 1px;
    border: 1px solid #b1c6e4;
    background-color: #fff;
    color: #000;
    text-align: right;
}

.total-rows input:read-only {
    background-color: #e3efff;
}

.total-rows .field {
    height: 19px;
}

.total-rows .field input {
    height: 17px;
    border: none;
}

.pair {
    display: grid;
    grid-template-columns: 1fr 1fr;
    gap: 6px;
}

.large .pair {
    grid-template-columns: 70px 1fr;
}
```
